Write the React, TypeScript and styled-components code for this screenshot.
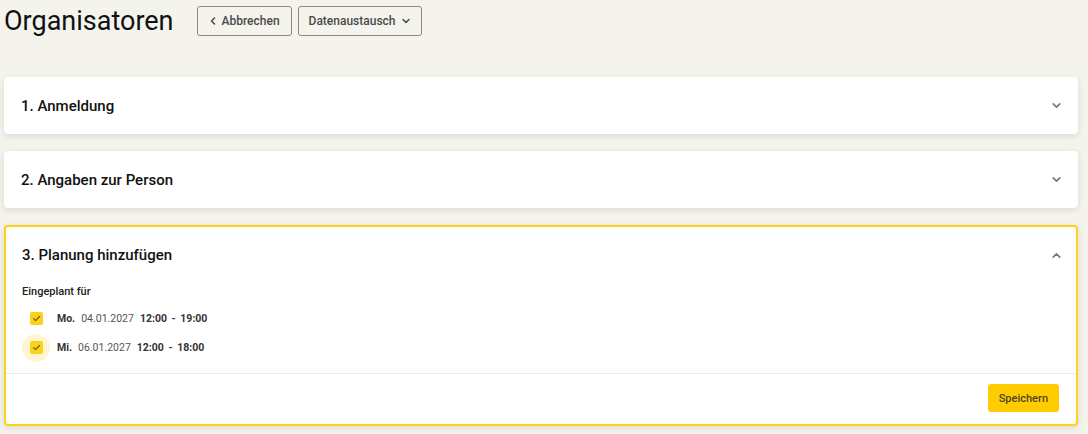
import styled, { createGlobalStyle } from "styled-components";

const GlobalStyle = createGlobalStyle`
    body {
        margin: 0;
        background: #f4f3ec;
        font-family: Roboto, "Liberation Sans", sans-serif;
        color: #1a1a1a;
    }
`

const Page = styled.div`
    padding: 6px 10px 10px 4px;
`

const Header = styled.div`
    display: flex;
    align-items: center;
    gap: 6px;
    height: 30px;
`

const Title = styled.h1`
    margin: 0 17px 0 0;
    font-size: 27px;
    font-weight: 400;
    color: #111;
`

const OutlineBtn = styled.button<{ $pad?: number }>`
    display: flex;
    align-items: center;
    gap: 5px;
    height: 30px;
    padding: 0 ${(p) => p.$pad ?? 10}px;
    background: transparent;
    border: 1px solid #8d8983;
    border-radius: 3px;
    font-family: inherit;
    font-size: 12px;
    font-weight: 500;
    color: #4a4a4a;
`

const Stack = styled.div`
    display: flex;
    flex-direction: column;
    gap: 17px;
    margin-top: 41px;
`

const Card = styled.section<{ $open?: boolean }>`
    background: #fff;
    border-radius: 4px;
    border: ${(p) => (p.$open ? "2px solid #fcd21c" : "none")};
    box-shadow: 0 2px 6px rgba(60, 55, 30, 0.12);
`

const CardHead = styled.div<{ $open?: boolean }>`
    display: flex;
    align-items: center;
    justify-content: space-between;
    height: ${(p) => (p.$open ? 56 : 57)}px;
    padding: 0 ${(p) => (p.$open ? 14 : 16)}px 0 ${(p) => (p.$open ? 16 : 17)}px;
`

const CardTitle = styled.h2`
    margin: 0;
    font-size: 15px;
    font-weight: 500;
    color: #111;
`

const Body = styled.div`
    padding: 2px 16px 11px 16px;
`

const Label = styled.div`
    font-size: 11px;
    font-weight: 500;
    color: #222;
    margin-bottom: 6px;
`

const Row = styled.div`
    display: flex;
    align-items: center;
    height: 29px;
    font-size: 10.5px;
`

const BoxWrap = styled.span<{ $focus?: boolean }>`
    display: flex;
    align-items: center;
    justify-content: center;
    width: 28px;
    height: 28px;
    border-radius: 50%;
    background: ${(p) => (p.$focus ? "#fff5d2" : "transparent")};
    margin-right: 7px;
`

const Box = styled.span`
    display: flex;
    align-items: center;
    justify-content: center;
    width: 13px;
    height: 13px;
    border-radius: 2px;
    background: #fcd116;
`

const Day = styled.b`
    font-weight: 700;
    color: #333;
    margin-right: 6px;
`

const Date = styled.span`
    color: #555;
    margin-right: 6px;
`

const Time = styled.b`
    font-weight: 700;
    color: #333;
    word-spacing: 2px;
`

const Footer = styled.div`
    display: flex;
    justify-content: flex-end;
    border-top: 1px solid #ebebeb;
    padding: 10px 17px 12px;
`

const SaveBtn = styled.button`
    height: 28px;
    padding: 0 11px;
    border: none;
    border-radius: 3px;
    background: #ffcc00;
    font-family: inherit;
    font-size: 11px;
    font-weight: 500;
    color: #4d4428;
`

const Chevron = ({ up, size = 11, color = "#777" }: { up?: boolean; size?: number; color?: string }) => (
    <svg width={size} height={size} viewBox="0 0 10 10" fill="none">
        <path
            d={up ? "M2 6.5 L5 3.5 L8 6.5" : "M2 3.5 L5 6.5 L8 3.5"}
            stroke={color}
            strokeWidth="1.5"
            strokeLinecap="round"
            strokeLinejoin="round"
        />
    </svg>
)

const Check = () => (
    <svg width="9" height="9" viewBox="0 0 10 10" fill="none">
        <path d="M1.8 5.2 L4 7.3 L8.3 2.8" stroke="#6a5a20" strokeWidth="1.3" strokeLinecap="round" strokeLinejoin="round" />
    </svg>
)

const slots = [
    { day: "Mo.", date: "04.01.2027", from: "12:00", to: "19:00" },
    { day: "Mi.", date: "06.01.2027", from: "12:00", to: "18:00", focus: true },
]

export default function App() {
    return (
        <Page>
            <GlobalStyle />
            <Header>
                <Title>Organisatoren</Title>
                <OutlineBtn $pad={11}>
                    <svg width="8" height="10" viewBox="0 0 8 10" fill="none">
                        <path d="M5.5 2 L2.5 5 L5.5 8" stroke="#4a4a4a" strokeWidth="1.5" strokeLinecap="round" strokeLinejoin="round" />
                    </svg>
                    Abbrechen
                </OutlineBtn>
                <OutlineBtn>
                    Datenaustausch
                    <Chevron size={10} color="#4a4a4a" />
                </OutlineBtn>
            </Header>

            <Stack>
                <Card>
                    <CardHead>
                        <CardTitle>1. Anmeldung</CardTitle>
                        <Chevron />
                    </CardHead>
                </Card>
                <Card>
                    <CardHead>
                        <CardTitle>2. Angaben zur Person</CardTitle>
                        <Chevron />
                    </CardHead>
                </Card>
                <Card $open>
                    <CardHead $open>
                        <CardTitle>3. Planung hinzufügen</CardTitle>
                        <Chevron up />
                    </CardHead>
                    <Body>
                        <Label>Eingeplant für</Label>
                        {slots.map((s) => (
                            <Row key={s.day}>
                                <BoxWrap $focus={s.focus}>
                                    <Box>
                                        <Check />
                                    </Box>
                                </BoxWrap>
                                <Day>{s.day}</Day>
                                <Date>{s.date}</Date>
                                <Time>
                                    {s.from} - {s.to}
                                </Time>
                            </Row>
                        ))}
                    </Body>
                    <Footer>
                        <SaveBtn>Speichern</SaveBtn>
                    </Footer>
                </Card>
            </Stack>
        </Page>
    );
}
